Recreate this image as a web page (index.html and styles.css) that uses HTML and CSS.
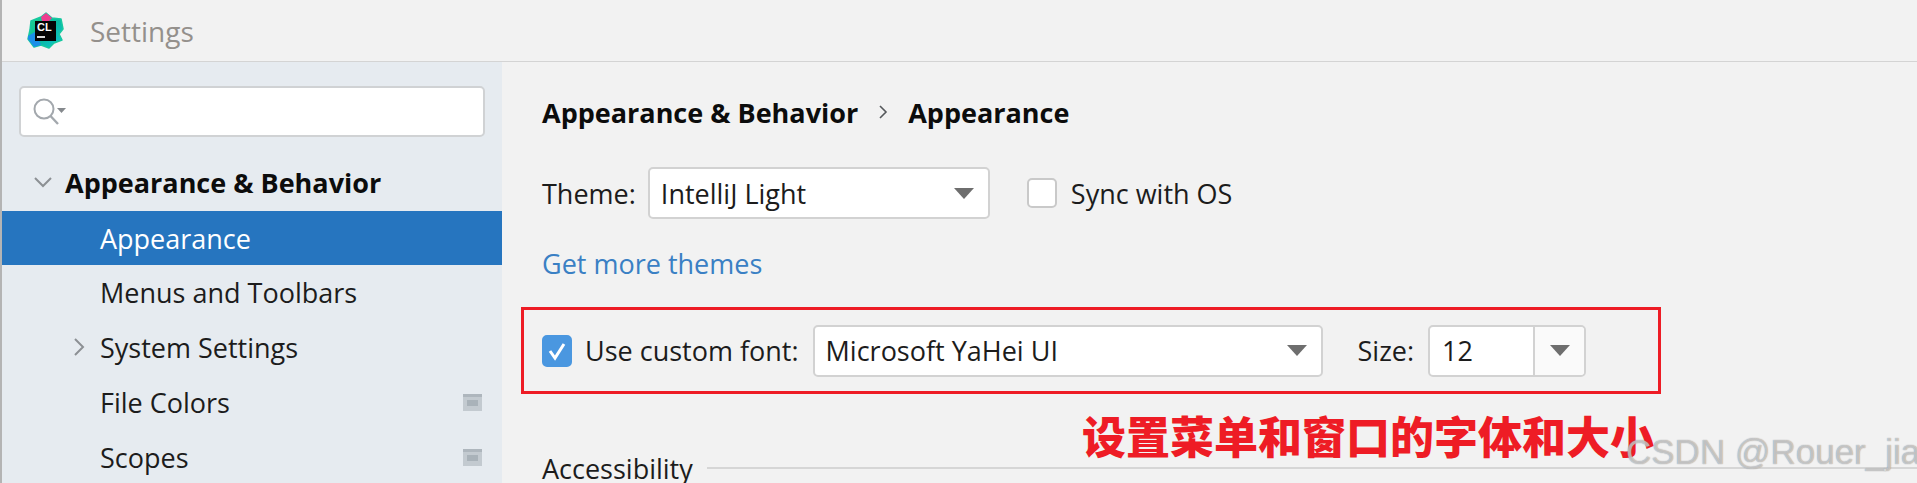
FILE: index.html
```html
<!DOCTYPE html>
<html lang="en">
<head>
    <meta charset="UTF-8">
    <title>Settings</title>
    <link rel="stylesheet" href="styles.css">
</head>
<body>
    <div class="window">
        <div class="titlebar">
            <svg class="logo" width="38" height="38" viewBox="0 0 38 38">
                <defs>
                    <linearGradient id="logoFill" x1="0" y1="0" x2="1" y2="1">
                        <stop offset="0" stop-color="#21d789"/>
                        <stop offset="0.55" stop-color="#09b9a0"/>
                        <stop offset="1" stop-color="#12c6d8"/>
                    </linearGradient>
                </defs>
                <path d="M4 9 L14 5 L19 1 L25 6 L34 7 L36 17 L32 22 L35 28 L27 31 L22 36 L14 33 L7 35 L1 27 L3 18 Z" fill="url(#logoFill)" stroke="#17c9a0" stroke-width="1.500" stroke-linejoin="round"/>
                <path d="M14 5 L19 1 L25 6 L22 9 L15 9 Z" fill="#ee3c8f"/>
                <path d="M1 24 L8 20 L14 33 L7 35 L1 27 Z" fill="#1b8fe8"/>
                <rect x="8" y="9" width="21" height="20" fill="#050505"/>
                <text x="10" y="19" class="logo-text">CL</text>
                <rect x="10" y="24" width="8" height="2" fill="#d8d8d8"/>
            </svg>
            <span class="window-title">Settings</span>
        </div>
        <div class="main">
            <div class="sidebar">
                <div class="search">
                    <svg width="34" height="30" viewBox="0 0 34 30">
                        <circle cx="12" cy="12" r="9.5" fill="none" stroke="#a3a8ad" stroke-width="2"/>
                        <path d="M18.5 19 L26 27" stroke="#a3a8ad" stroke-width="2.4" fill="none"/>
                        <path d="M25 11 H34 L29.500 16 Z" fill="#85898d"/>
                    </svg>
                </div>
                <ul class="tree">
                    <li class="tree-item tree-root">
                        <svg class="arrow" width="20" height="12" viewBox="0 0 20 12"><path d="M2 2 L10 10 L18 2" fill="none" stroke="#8c9094" stroke-width="2"/></svg>
                        Appearance &amp; Behavior
                    </li>
                    <li class="tree-item tree-selected">Appearance</li>
                    <li class="tree-item">Menus and Toolbars</li>
                    <li class="tree-item">
                        <svg class="arrow-right" width="12" height="20" viewBox="0 0 12 20"><path d="M2 2 L10 10 L2 18" fill="none" stroke="#8c9094" stroke-width="2"/></svg>
                        System Settings
                    </li>
                    <li class="tree-item">File Colors<span class="scope-icon"></span></li>
                    <li class="tree-item">Scopes<span class="scope-icon"></span></li>
                </ul>
            </div>
            <div class="content">
                <div class="breadcrumb">
                    <span>Appearance &amp; Behavior</span>
                    <svg width="10" height="16" viewBox="0 0 10 16"><path d="M2 2 L8 8 L2 14" fill="none" stroke="#55585b" stroke-width="1.600"/></svg>
                    <span>Appearance</span>
                </div>
                <div class="theme-row">
                    <label>Theme:</label>
                    <div class="combo theme-combo">
                        <span>IntelliJ Light</span>
                        <i class="caret"></i>
                    </div>
                    <span class="checkbox"></span>
                    <label>Sync with OS</label>
                </div>
                <a class="more-link" href="#">Get more themes</a>
                <div class="font-box">
                    <span class="checkbox checked">
                        <svg width="22" height="22" viewBox="0 0 22 22"><path d="M4 11 L9 18 L18 4" fill="none" stroke="#fff" stroke-width="3"/></svg>
                    </span>
                    <label>Use custom font:</label>
                    <div class="combo font-combo">
                        <span>Microsoft YaHei UI</span>
                        <i class="caret"></i>
                    </div>
                    <label class="size-label">Size:</label>
                    <div class="combo size-combo">
                        <span class="size-value">12</span>
                        <span class="size-button"><i class="caret"></i></span>
                    </div>
                </div>
                <div class="section-title">
                    <span>Accessibility</span>
                    <div class="section-line"></div>
                </div>
            </div>
        </div>
        <div class="note">设置菜单和窗口的字体和大小</div>
        <div class="watermark">CSDN @Rouer_jia</div>
    </div>
</body>
</html>
```

FILE: styles.css
```css
html, body {
    margin: 0;
    padding: 0;
    height: 100%;
}

body {
    overflow: hidden;
    background-color: #f2f2f2;
    font-family: "Open Sans", "Noto Sans", sans-serif;
    font-size: 27px;
    color: #1c1c1c;
}

.window {
    position: relative;
    height: 483px;
    border-left: 2px solid #b4b4b4;
    overflow: hidden;
}

.titlebar {
    display: flex;
    align-items: center;
    border-bottom: 1px solid #d4d4d4;
    box-sizing: border-box;
    height: 62px;
    padding-left: 25px;
}

.logo {
    margin-right: 25px;
}

.logo-text {
    font-family: "Liberation Sans", sans-serif;
    font-size: 11px;
    font-weight: bold;
    fill: #fff;
}

.window-title {
    color: #94908c;
    font-size: 28px;
}

.main {
    display: flex;
    height: 421px;
}

.sidebar {
    width: 500px;
    flex-shrink: 0;
    background-color: #e6ebf0;
    padding-top: 24px;
    box-sizing: border-box;
}

.search {
    width: 466px;
    height: 51px;
    margin-left: 17px;
    background-color: white;
    border: 2px solid #d0d2d4;
    border-radius: 5px;
    box-sizing: border-box;
    display: flex;
    align-items: center;
    padding-left: 11px;
}

.tree {
    list-style: none;
    margin: 18px 0 0 0;
    padding: 0;
}

.tree-item {
    position: relative;
    height: 55px;
    padding-left: 98px;
    padding-right: 20px;
    display: flex;
    align-items: center;
}

.tree-root {
    height: 54px;
    padding-bottom: 2px;
    padding-left: 63px;
    font-weight: 700;
    color: #0c0c0c;
}

.tree-selected {
    height: 54px;
    background-color: #2675bf;
    color: white;
}

.arrow {
    position: absolute;
    left: 31px;
    top: 21px;
}

.arrow-right {
    position: absolute;
    left: 71px;
    top: 17px;
}

.scope-icon {
    margin-left: auto;
    width: 19px;
    height: 17px;
    background-color: #c3cad0;
    border-top: 3px solid #aeb6bd;
    box-sizing: border-box;
    position: relative;
}

.scope-icon::after {
    content: "";
    position: absolute;
    left: 4px;
    top: 3px;
    width: 11px;
    height: 6px;
    background-color: #a9b2b9;
}

.content {
    flex: 1;
    padding: 30px 0 0 40px;
    min-width: 0;
}

.breadcrumb {
    display: flex;
    align-items: center;
    gap: 20px;
    height: 40px;
    font-weight: 700;
    color: #0c0c0c;
}

.theme-row {
    display: flex;
    align-items: center;
    margin-top: 35px;
    height: 52px;
}

.combo {
    display: flex;
    align-items: center;
    justify-content: space-between;
    height: 52px;
    box-sizing: border-box;
    background-color: white;
    border: 2px solid #d2d2d2;
    border-radius: 5px;
    padding: 0 14px 0 11px;
}

.caret {
    width: 0;
    height: 0;
    border-left: 10px solid transparent;
    border-right: 10px solid transparent;
    border-top: 11px solid #6e6e6e;
}

.theme-combo {
    width: 342px;
    margin-left: 12px;
    margin-right: 37px;
}

.checkbox {
    width: 30px;
    height: 30px;
    background-color: white;
    border: 2px solid #c9c9c9;
    border-radius: 5px;
    box-sizing: border-box;
    margin-right: 14px;
    flex-shrink: 0;
    display: flex;
    align-items: center;
    justify-content: center;
}

.checked {
    background-color: #4a97e0;
    border-color: #4a97e0;
    height: 32px;
    margin-right: 13px;
}

.more-link {
    display: block;
    margin-top: 28px;
    height: 34px;
    line-height: 34px;
    color: #3a80c4;
    text-decoration: none;
}

.font-box {
    display: flex;
    align-items: center;
    height: 87px;
    width: 1140px;
    margin: 26px 0 0 -21px;
    padding-left: 18px;
    box-sizing: border-box;
    border: 3px solid #ee1c25;
}

.font-combo {
    width: 510px;
    margin-left: 14px;
}

.size-label {
    margin-left: 35px;
}

.size-combo {
    width: 158px;
    margin-left: 14px;
    padding: 0;
}

.size-value {
    flex: 1;
    padding-left: 12px;
}

.size-button {
    width: 49px;
    height: 100%;
    background-color: #fafafa;
    border-left: 2px solid #d2d2d2;
    border-radius: 0 4px 4px 0;
    display: flex;
    align-items: center;
    justify-content: center;
}

.section-title {
    display: flex;
    align-items: center;
    gap: 14px;
    margin-top: 57px;
    height: 34px;
}

.section-line {
    flex: 1;
    height: 2px;
    background-color: #d6d6d6;
}

.note {
    position: absolute;
    left: 1080px;
    top: 410px;
    font-family: "Noto Sans CJK SC", sans-serif;
    font-size: 44px;
    line-height: 50px;
    font-weight: 900;
    color: #ee1c25;
    white-space: nowrap;
}

.watermark {
    position: absolute;
    left: 1624px;
    top: 431px;
    font-family: "Liberation Sans", sans-serif;
    font-size: 35px;
    line-height: 42px;
    color: rgba(255, 255, 255, 0.55);
    text-shadow: 0 0 1px rgba(90, 90, 90, 0.8);
    white-space: nowrap;
}
```
